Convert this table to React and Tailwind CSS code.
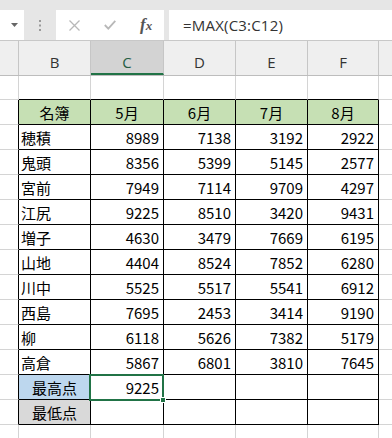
import React from "react";

const data = [
  ["穂積", 8989, 7138, 3192, 2922],
  ["鬼頭", 8356, 5399, 5145, 2577],
  ["宮前", 7949, 7114, 9709, 4297],
  ["江尻", 9225, 8510, 3420, 9431],
  ["増子", 4630, 3479, 7669, 6195],
  ["山地", 4404, 8524, 7852, 6280],
  ["川中", 5525, 5517, 5541, 6912],
  ["西島", 7695, 2453, 3414, 9190],
  ["柳", 6118, 5626, 7382, 5179],
  ["高倉", 5867, 6801, 3810, 7645],
];

const widths = ["w-[72px]", "w-[73px]", "w-[72px]", "w-[72px]", "w-[71px]"];

function Cell({ w, children, className = "" }) {
  return (
    <div
      className={`${w} shrink-0 h-full border-r border-b border-black flex items-center pt-[2px] ${className}`}
    >
      {children}
    </div>
  );
}

function TableRow({ cells }) {
  return (
    <div className="flex h-[25px]">
      <div className="w-[19px] shrink-0 h-full border-r border-black border-b border-b-[#d4d4d4]" />
      {cells}
      <div className="flex-1 h-full border-b border-[#d4d4d4]" />
    </div>
  );
}

export default function App() {
  return (
    <div
      className="w-[392px] h-[438px] overflow-hidden bg-white text-[#000]"
      style={{ fontFamily: '"Noto Sans CJK JP", "Noto Sans", sans-serif' }}
    >
      {/* formula bar */}
      <div className="h-[41px] bg-[#e6e6e6] border-b border-[#c8c8c8] flex items-start pt-[10px]">
        <div className="w-[24px] h-[30px] bg-white flex items-center justify-end pr-[6px]">
          <svg width="7" height="4" viewBox="0 0 7 4">
            <path d="M0 0 L7 0 L3.5 4 Z" fill="#666" />
          </svg>
        </div>
        <div className="w-[32px] h-[30px] flex items-center justify-center">
          <svg width="3" height="11" viewBox="0 0 3 11">
            <rect x="0" y="0" width="2" height="2" fill="#9a9a9a" />
            <rect x="0" y="4.5" width="2" height="2" fill="#9a9a9a" />
            <rect x="0" y="9" width="2" height="2" fill="#9a9a9a" />
          </svg>
        </div>
        <div className="w-[108px] h-[30px] bg-white relative">
          <svg className="absolute left-[13px] top-[10px]" width="11" height="11" viewBox="0 0 11 11">
            <path d="M0.5 0.5 L10.5 10.5 M10.5 0.5 L0.5 10.5" stroke="#b8b8b8" strokeWidth="1.3" fill="none" />
          </svg>
          <svg className="absolute left-[48px] top-[10px]" width="12" height="10" viewBox="0 0 12 10">
            <path d="M0.8 5 L4.3 8.6 L11.3 0.8" stroke="#b8b8b8" strokeWidth="1.8" fill="none" />
          </svg>
          <span
            className="absolute left-[84px] top-[3px] text-[17px] italic font-bold text-[#555] leading-[24px]"
            style={{ fontFamily: '"Liberation Serif", serif' }}
          >
            f<span className="text-[13px]">x</span>
          </span>
        </div>
        <div className="w-[5px]" />
        <div
          className="flex-1 h-[30px] bg-white flex items-center pl-[14px] text-[15px] text-[#333] tracking-[0.2px]"
          style={{ fontFamily: '"Open Sans", "Noto Sans", sans-serif' }}
        >
          =MAX(C3:C12)
        </div>
      </div>

      {/* column header */}
      <div
        className="h-[35px] flex bg-[#efefef] border-b border-[#bdbdbd] text-[15px] text-[#333]"
        style={{ fontFamily: '"Open Sans", "Noto Sans", sans-serif' }}
      >
        <div className="w-[19px] shrink-0 border-r border-[#c6c6c6]" />
        <div className="w-[72px] shrink-0 border-r border-[#c6c6c6] flex items-center justify-center pt-[8px]">B</div>
        <div className="w-[73px] shrink-0 border-r border-[#c6c6c6] bg-[#d3d3d3] border-b-2 border-b-[#217346] flex items-center justify-center pt-[10px] text-[#255d43]">C</div>
        <div className="w-[72px] shrink-0 border-r border-[#c6c6c6] flex items-center justify-center pt-[8px]">D</div>
        <div className="w-[72px] shrink-0 border-r border-[#c6c6c6] flex items-center justify-center pt-[8px]">E</div>
        <div className="w-[71px] shrink-0 border-r border-[#c6c6c6] flex items-center justify-center pt-[8px]">F</div>
        <div className="flex-1" />
      </div>

      {/* row 1 */}
      <div className="flex h-[24px]">
        <div className="w-[19px] shrink-0 h-full border-r border-b border-[#d4d4d4]" />
        {widths.map((w, i) => (
          <div key={i} className={`${w} shrink-0 h-full border-r border-r-[#d4d4d4] border-b border-b-black`} />
        ))}
        <div className="flex-1 h-full border-b border-[#d4d4d4]" />
      </div>

      <div className="text-[15px]">
        <TableRow
          cells={["名簿", "5月", "6月", "7月", "8月"].map((t, i) => (
            <Cell key={i} w={widths[i]} className="justify-center bg-[#c6e0b4]">
              {t}
            </Cell>
          ))}
        />
        {data.map((row, r) => (
          <TableRow
            key={r}
            cells={row.map((v, i) => (
              <Cell key={i} w={widths[i]} className={i === 0 ? "pl-[2px]" : "justify-end pr-[4px]"}>
                {v}
              </Cell>
            ))}
          />
        ))}
        <TableRow
          cells={[
            <Cell key="a" w={widths[0]} className="justify-center bg-[#bdd7ee]">最高点</Cell>,
            <div key="b" className="w-[73px] shrink-0 h-full border-r border-b border-black relative">
              <div className="h-full flex items-center justify-end pr-[4px] pt-[2px]">9225</div>
              <div className="absolute left-[-2px] top-[-1px] w-[75px] h-[27px] border-2 border-[#217346]" />
              <div className="absolute left-[69px] top-[22px] w-[6px] h-[6px] bg-[#217346] border border-white" />
            </div>,
            <Cell key="c" w={widths[2]} />,
            <Cell key="d" w={widths[3]} />,
            <Cell key="e" w={widths[4]} />,
          ]}
        />
        <TableRow
          cells={[
            <Cell key="a" w={widths[0]} className="justify-center bg-[#d9d9d9]">最低点</Cell>,
            <Cell key="b" w={widths[1]} />,
            <Cell key="c" w={widths[2]} />,
            <Cell key="d" w={widths[3]} />,
            <Cell key="e" w={widths[4]} />,
          ]}
        />
        <div className="flex h-[25px]">
          <div className="w-[19px] shrink-0 h-full border-r border-b border-[#d4d4d4]" />
          {widths.map((w, i) => (
            <div key={i} className={`${w} shrink-0 h-full border-r border-b border-[#d4d4d4]`} />
          ))}
          <div className="flex-1 h-full border-b border-[#d4d4d4]" />
        </div>
      </div>
    </div>
  );
}
